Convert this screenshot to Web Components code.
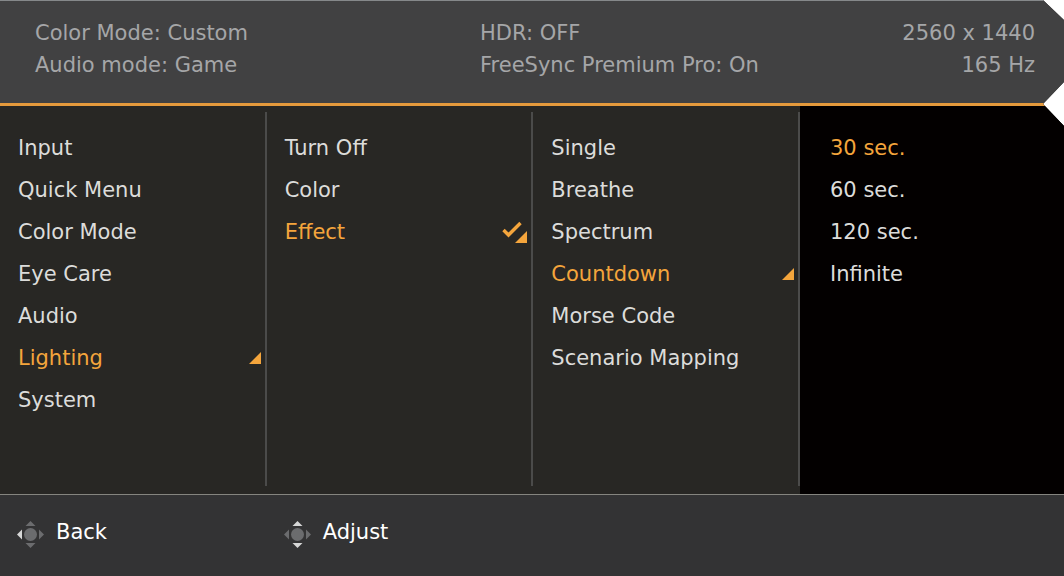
<!DOCTYPE html>
<html lang="en">
<head>
<meta charset="utf-8">
<title>Monitor OSD</title>
<style>
  body {
    margin: 0;
    background: #fff;
    font-family: Verdana, "DejaVu Sans", sans-serif;
    font-size: 21px;
  }
</style>
</head>
<body>
<osd-screen>
  <osd-status slot="status">
    <span slot="mode">Color Mode: Custom</span>
    <span slot="mode">Audio mode: Game</span>
    <span slot="sync">HDR: OFF</span>
    <span slot="sync">FreeSync Premium Pro: On</span>
    <span slot="signal">2560 x 1440</span>
    <span slot="signal">165 Hz</span>
  </osd-status>

  <osd-column label="Main menu">
    <osd-item>Input</osd-item>
    <osd-item>Quick Menu</osd-item>
    <osd-item>Color Mode</osd-item>
    <osd-item>Eye Care</osd-item>
    <osd-item>Audio</osd-item>
    <osd-item active mark="more">Lighting</osd-item>
    <osd-item>System</osd-item>
  </osd-column>
  <osd-column label="Lighting">
    <osd-item>Turn Off</osd-item>
    <osd-item>Color</osd-item>
    <osd-item active mark="check">Effect</osd-item>
  </osd-column>
  <osd-column label="Effect">
    <osd-item>Single</osd-item>
    <osd-item>Breathe</osd-item>
    <osd-item>Spectrum</osd-item>
    <osd-item active mark="more">Countdown</osd-item>
    <osd-item>Morse Code</osd-item>
    <osd-item>Scenario Mapping</osd-item>
  </osd-column>
  <osd-column label="Countdown" last>
    <osd-item active>30 sec.</osd-item>
    <osd-item>60 sec.</osd-item>
    <osd-item>120 sec.</osd-item>
    <osd-item>Infinite</osd-item>
  </osd-column>

  <osd-hint slot="hints" keys="left">Back</osd-hint>
  <osd-hint slot="hints" keys="up down">Adjust</osd-hint>
</osd-screen>

<script>
class OsdElement extends HTMLElement {
  constructor() {
    super();
    const template = document.createElement('template');
    template.innerHTML = this.constructor.markup;
    this.attachShadow({ mode: 'open' }).appendChild(template.content.cloneNode(true));
  }
}

class OsdScreen extends OsdElement {
  static markup = `
    <style>
      :host {
        --columns: repeat(3, 1fr) 264px;
        display: flex;
        flex-direction: column;
        min-height: 100vh;
        background: #333334;
        /* cut top corner and the notch where the header meets the menu */
        clip-path: polygon(0 0, calc(100% - 21px) 0, 100% 20px, 100% 82px,
          calc(100% - 21px) 104px, 100% 126px, 100% 100%, 0 100%);
      }
      main {
        flex: 1;
        display: grid;
        grid-template-columns: var(--columns);
        background: #282724;
      }
      footer {
        display: grid;
        grid-template-columns: var(--columns);
        border-top: 1px solid #85857f;
        padding: 17px 0 24px;
      }
    </style>
    <slot name="status"></slot>
    <main><slot></slot></main>
    <footer><slot name="hints"></slot></footer>
  `;
}

class OsdStatus extends OsdElement {
  static markup = `
    <style>
      :host {
        display: block;
        border-top: 1px solid #85888a;
        border-bottom: 3px solid #e59a3c;
        background: #414142;
        color: #a5a6a8;
      }
      header {
        display: grid;
        grid-template-columns: 44.5% 1fr auto;
        padding: 16px 29px 22px 35px;
        line-height: 32px;
      }
      div {
        display: flex;
        flex-direction: column;
      }
      .signal {
        align-items: flex-end;
      }
    </style>
    <header>
      <div><slot name="mode"></slot></div>
      <div><slot name="sync"></slot></div>
      <div class="signal"><slot name="signal"></slot></div>
    </header>
  `;
}

class OsdColumn extends OsdElement {
  static markup = `
    <style>
      :host {
        --indent: 18px;
        display: flex;
        padding: 6px 0 8px;
      }
      :host([last]) {
        --indent: 30px;
        background: #030000;
      }
      nav {
        flex: 1;
        padding: 15px 0;
        border-right: 2px solid #4b4b4a;
      }
      :host([last]) nav {
        border-color: transparent;
      }
    </style>
    <nav><slot></slot></nav>
  `;
  connectedCallback() {
    this.shadowRoot.querySelector('nav').setAttribute('aria-label', this.getAttribute('label'));
  }
}

class OsdItem extends OsdElement {
  static markup = `
    <style>
      :host {
        display: block;
        color: #dcdcda;
      }
      :host([active]) {
        color: #f4a53c;
      }
      button {
        display: flex;
        align-items: center;
        justify-content: space-between;
        width: 100%;
        height: 42px;
        padding: 0 4px 0 var(--indent);
        border: 0;
        background: none;
        color: inherit;
        font: inherit;
        text-align: left;
        cursor: pointer;
      }
      svg {
        display: none;
        fill: #f4a53c;
      }
      :host([mark="more"]) .more,
      :host([mark="check"]) .check {
        display: block;
      }
    </style>
    <button type="button">
      <span><slot></slot></span>
      <svg class="more" width="12" height="12" viewBox="0 0 12 12"><path d="M12 0V12H0Z"/></svg>
      <svg class="check" width="25" height="22" viewBox="0 0 25 22">
        <path d="M1.5 9L6.5 14L18.5 2" fill="none" stroke="#f4a53c" stroke-width="3.4"/>
        <path d="M25 10V22H13Z"/>
      </svg>
    </button>
  `;
}

class OsdHint extends OsdElement {
  static markup = `
    <style>
      :host {
        display: block;
        color: #fff;
      }
      button {
        display: flex;
        gap: 12px;
        padding: 0 0 0 17px;
        border: 0;
        background: none;
        color: inherit;
        font: inherit;
        line-height: 40px;
        cursor: pointer;
      }
      svg {
        align-self: flex-end;
        margin-bottom: 4px;
        fill: #6b6c6e;
      }
      .lit {
        fill: #d6d7d7;
      }
    </style>
    <button type="button">
      <svg width="27" height="27" viewBox="0 0 27 27">
        <circle cx="13.5" cy="13.5" r="6.5"/>
        <path class="up" d="M13.5 0L18.5 5H8.5Z"/>
        <path class="down" d="M13.5 27L18.5 22H8.5Z"/>
        <path class="left" d="M0 13.5L5 8.5V18.5Z"/>
        <path class="right" d="M27 13.5L22 8.5V18.5Z"/>
      </svg>
      <span><slot></slot></span>
    </button>
  `;
  connectedCallback() {
    this.getAttribute('keys').split(' ').forEach(key => {
      this.shadowRoot.querySelector('.' + key).classList.add('lit');
    });
  }
}

customElements.define('osd-screen', OsdScreen);
customElements.define('osd-status', OsdStatus);
customElements.define('osd-column', OsdColumn);
customElements.define('osd-item', OsdItem);
customElements.define('osd-hint', OsdHint);
</script>
</body>
</html>
